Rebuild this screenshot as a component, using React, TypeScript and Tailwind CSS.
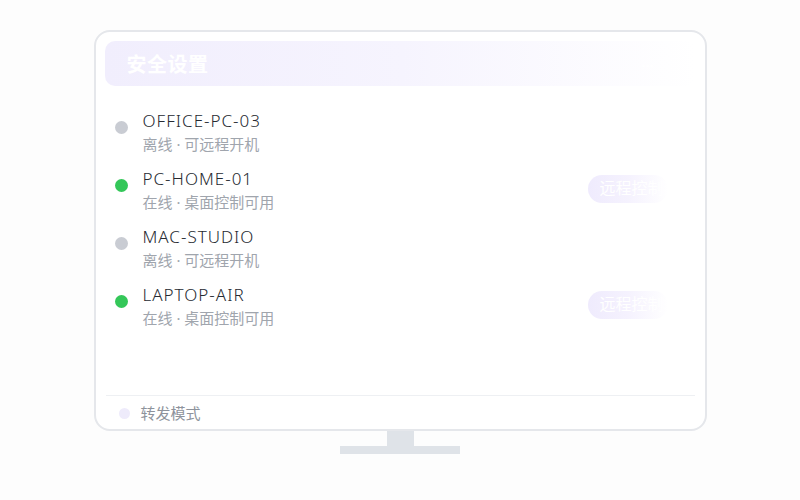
import React from "react";

type Device = {
  name: string;
  online: boolean;
};

const devices: Device[] = [
  { name: "OFFICE-PC-03", online: false },
  { name: "PC-HOME-01", online: true },
  { name: "MAC-STUDIO", online: false },
  { name: "LAPTOP-AIR", online: true },
];

function DeviceRow({ device }: { device: Device }) {
  return (
    <div className="flex items-start h-[58px]">
      <span
        className={
          device.online
            ? "mt-[11px] w-[13px] h-[13px] rounded-full bg-[#34c759] shrink-0"
            : "mt-[11px] w-[13px] h-[13px] rounded-full bg-[#c9ccd3] shrink-0"
        }
      />
      <div className="ml-[15px] flex flex-col">
        <span className="text-[17px] leading-[22px] text-[#262a31] tracking-[1px] font-light">
          {device.name}
        </span>
        <span className="mt-[2px] text-[15px] leading-[20px] text-[#a0a5ad]">
          {device.online ? "在线 · 桌面控制可用" : "离线 · 可远程开机"}
        </span>
      </div>
      {device.online && (
        <div className="ml-auto mr-[18px] mt-[7px] h-7 w-[80px] rounded-full bg-gradient-to-r from-[#efebfd] via-[#f5f2fe] to-transparent flex items-center pl-3">
          <span className="text-[16px] text-white font-['Liberation_Serif','Noto_Sans_CJK_SC',serif] whitespace-nowrap overflow-hidden">
            远程控制
          </span>
        </div>
      )}
    </div>
  );
}

export default function App() {
  return (
    <div className="w-[800px] h-[500px] bg-[#fdfdfd] flex flex-col items-center pt-[30px] font-['Noto_Sans','Noto_Sans_CJK_SC',sans-serif]">
      {/* Monitor screen */}
      <div className="w-[613px] h-[401px] rounded-[16px] border-2 border-[#e5e7eb] bg-white flex flex-col p-[9px] pb-0">
        <div className="h-[45px] rounded-[10px] bg-gradient-to-r from-[#f1eefd] via-[#f6f4fe] to-white flex items-center px-[22px] pt-[3px]">
          <span className="text-[20px] font-bold text-white tracking-[0.5px]">安全设置</span>
          <span className="ml-auto mr-[20px] text-[15px] text-white/80">···</span>
        </div>

        <div className="pt-[24px] px-[10px] flex flex-col">
          {devices.map((d) => (
            <DeviceRow key={d.name} device={d} />
          ))}
        </div>

        <div className="mt-auto mx-[1px] border-t border-[#eef0f3] h-[34px] flex items-center pl-[13px] pt-[1px]">
          <span className="w-[11px] h-[11px] rounded-full bg-[#eeebfb]" />
          <span className="ml-[11px] text-[15px] text-[#8e939c]">转发模式</span>
        </div>
      </div>

      {/* Stand */}
      <div className="w-[27px] h-[15px] bg-[#dfe3e8]" />
      <div className="w-[120px] h-[8px] bg-[#dfe3e8]" />
    </div>
  );
}
